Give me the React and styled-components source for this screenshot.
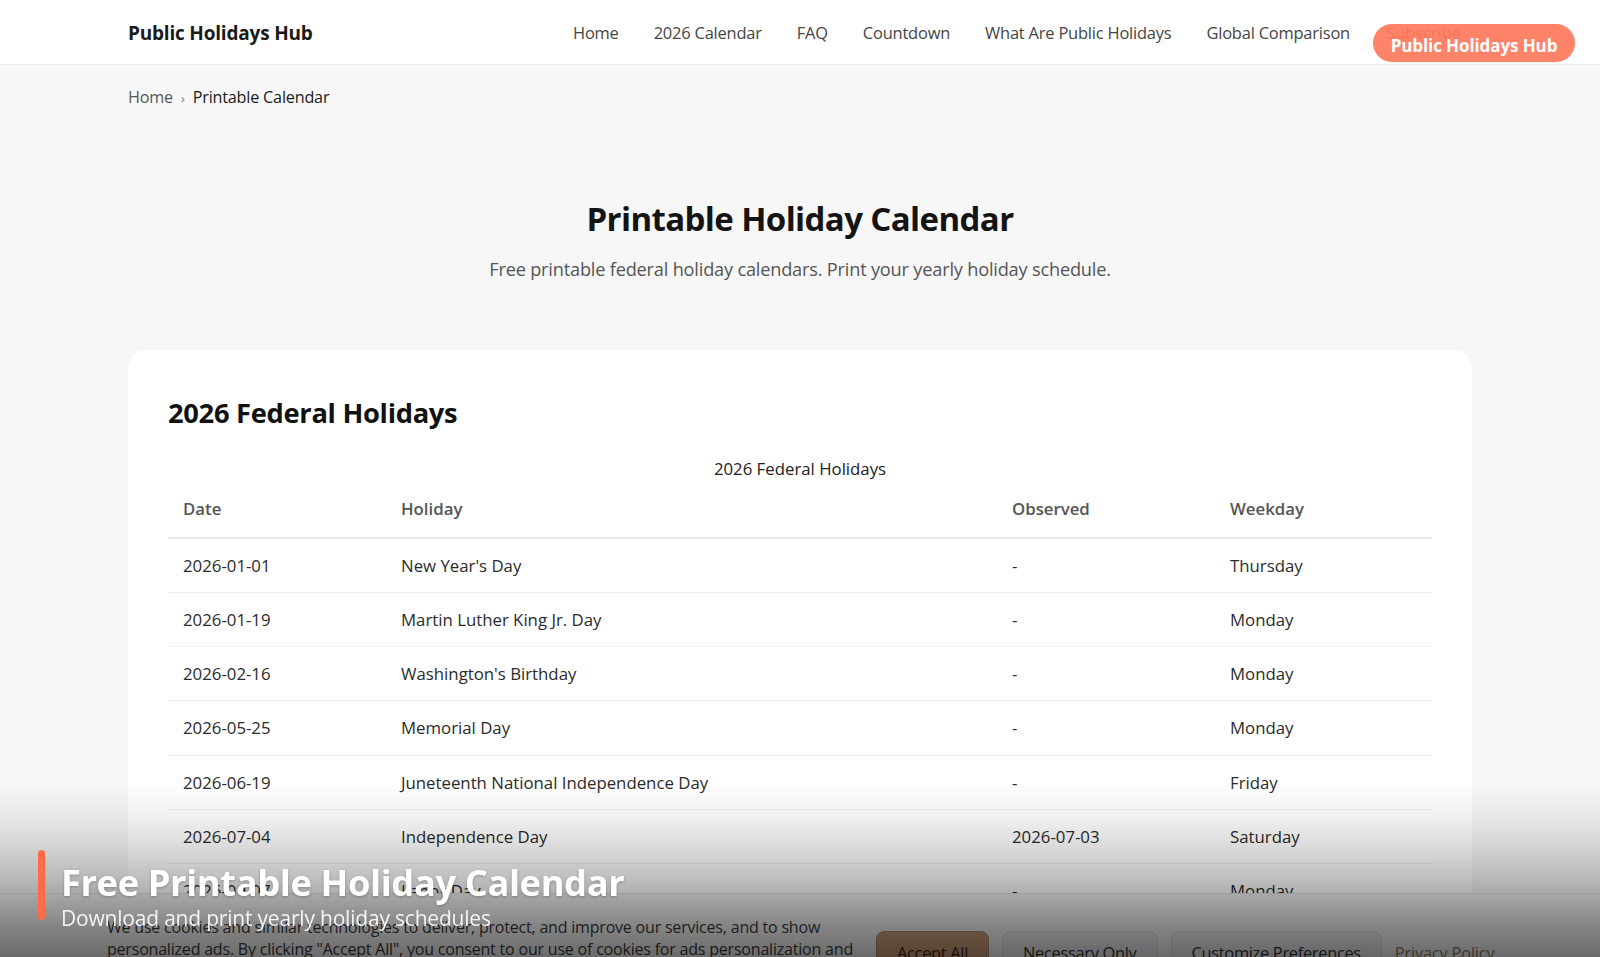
import React from "react";
import styled, { createGlobalStyle } from "styled-components";

const GlobalStyle = createGlobalStyle`
  html, body {
    margin: 0;
    padding: 0;
    overflow: hidden;
    height: 100%;
  }
  body {
    background: #f7f7f7;
    font-family: "Open Sans", "Noto Sans", "Liberation Sans", sans-serif;
    color: #222;
  }
  * { box-sizing: border-box; }
`;

const FONT = `"Open Sans", "Noto Sans", "Liberation Sans", sans-serif`;

const Page = styled.div`
  min-height: 100vh;
  background: #f7f7f7;
`;

const Header = styled.header`
  background: #ffffff;
  border-bottom: 1px solid #eeeeee;
  height: 65px;
`;

const HeaderInner = styled.div`
  max-width: 1344px;
  margin: 0 auto;
  height: 100%;
  display: flex;
  align-items: center;
  justify-content: space-between;
  padding-top: 1px;
`;

const Logo = styled.a`
  font-family: ${FONT};
  font-weight: 700;
  font-size: 19px;
  color: #1a1a1a;
  text-decoration: none;
  letter-spacing: -0.2px;
`;

const Nav = styled.nav`
  display: flex;
  align-items: center;
  gap: 35px;
`;

const NavLink = styled.a`
  font-family: ${FONT};
  font-size: 16.45px;
  color: #454545;
  text-decoration: none;
  letter-spacing: -0.2px;
`;

const SubscribeButton = styled.button`
  font-family: ${FONT};
  font-size: 16.45px;
  color: #555;
  background: transparent;
  border: none;
  padding: 8px 15px;
  margin-left: -14px;
  margin-right: -4px;
  cursor: pointer;
`;

const HubBadge = styled.div`
  position: absolute;
  top: 24px;
  left: 1373px;
  width: 202px;
  height: 38px;
  border-radius: 19px;
  background: rgba(255, 122, 92, 0.93);
  color: #fff;
  font-family: ${FONT};
  font-weight: 700;
  font-size: 17px;
  display: flex;
  align-items: center;
  justify-content: center;
  padding-top: 4px;
  letter-spacing: -0.1px;
`;

const Container = styled.main`
  max-width: 1344px;
  margin: 0 auto;
`;

const Breadcrumb = styled.nav`
  display: flex;
  align-items: center;
  gap: 8px;
  padding-top: 19px;
  font-family: ${FONT};
  font-size: 16.2px;
  line-height: 22px;
  letter-spacing: -0.2px;
`;

const Crumb = styled.a`
  color: ${(p) => (p.$current ? "#1a1a1a" : "#555")};
  font-weight: ${(p) => (p.$current ? 500 : 400)};
  text-decoration: none;
`;

const Sep = styled.span`
  color: #777;
  font-size: 13px;
  padding-top: 3px;
`;

const Hero = styled.section`
  text-align: center;
  padding-top: 89px;
`;

const Title = styled.h1`
  margin: 0;
  font-family: ${FONT};
  font-weight: 700;
  font-size: 33px;
  line-height: 41px;
  color: #141414;
  letter-spacing: -0.6px;
`;

const Subtitle = styled.p`
  margin: 17px 0 0;
  font-family: ${FONT};
  font-size: 18.2px;
  line-height: 27px;
  color: #555;
  letter-spacing: -0.2px;
`;

const Card = styled.section`
  margin-top: 67px;
  background: #fff;
  border-radius: 18px;
  padding: 43px 40px 40px;
  box-shadow: 0 1px 3px rgba(0, 0, 0, 0.03);
`;

const CardTitle = styled.h2`
  margin: 0;
  font-family: ${FONT};
  font-weight: 700;
  font-size: 27.3px;
  line-height: 40px;
  color: #111;
  letter-spacing: -0.3px;
`;

const Table = styled.table`
  margin-top: 25px;
  width: 100%;
  border-collapse: collapse;
  font-family: ${FONT};
  font-size: 16.8px;
`;

const Caption = styled.caption`
  caption-side: top;
  line-height: 22px;
  color: #222;
  padding-bottom: 2px;
`;

const Th = styled.th`
  text-align: left;
  font-weight: 600;
  color: #555;
  padding: 16px 15px 17px;
  line-height: 21.5px;
  border-bottom: 2px solid #e6e6e6;
  width: ${(p) => p.$w || "auto"};
`;

const Td = styled.td`
  padding: 16px 15px;
  line-height: 21.3px;
  color: #2b2b2b;
  border-bottom: 1px solid #f0f0f0;
`;

const Shade = styled.div`
  position: fixed;
  left: 0;
  right: 0;
  bottom: 0;
  height: 175px;
  pointer-events: none;
  background: linear-gradient(
    to bottom,
    rgba(0, 0, 0, 0) 0%,
    rgba(0, 0, 0, 0.06) 20%,
    rgba(0, 0, 0, 0.17) 42%,
    rgba(0, 0, 0, 0.3) 62%,
    rgba(0, 0, 0, 0.46) 82%,
    rgba(0, 0, 0, 0.57) 100%
  );
  z-index: 20;
`;

const OverlayCaption = styled.div`
  position: fixed;
  left: 38px;
  top: 850px;
  display: flex;
  gap: 16px;
  z-index: 30;
`;

const AccentBar = styled.div`
  width: 7px;
  height: 70px;
  border-radius: 4px;
  background: #ff6b47;
`;

const OverlayText = styled.div`
  display: flex;
  flex-direction: column;
  font-family: ${FONT};
  color: #fff;
`;

const OverlayTitle = styled.div`
  font-weight: 700;
  font-size: 36.3px;
  line-height: 44px;
  margin-top: 10px;
  letter-spacing: -0.4px;
  text-shadow: 0 1px 3px rgba(0, 0, 0, 0.25);
`;

const OverlaySub = styled.div`
  font-size: 21px;
  line-height: 28px;
  color: rgba(255, 255, 255, 0.9);
  margin-top: 0px;
  letter-spacing: -0.2px;
`;

const CookieBanner = styled.div`
  position: fixed;
  left: 0;
  right: 0;
  top: 893px;
  height: 140px;
  background: #f6f6f6;
  border-top: 1px solid #e4e4e4;
  z-index: 10;
  display: flex;
  align-items: flex-start;
  padding: 22px 0 0 107px;
  gap: 17px;
`;

const CookieText = styled.p`
  margin: 0;
  width: 752px;
  font-family: ${FONT};
  font-size: 16px;
  line-height: 22px;
  color: #3a3a3a;
  letter-spacing: -0.2px;
`;

const CookieActions = styled.div`
  display: flex;
  align-items: center;
  gap: 13px;
  padding-top: 15px;
`;

const CookieButton = styled.button`
  font-family: ${FONT};
  font-size: 16.4px;
  letter-spacing: -0.3px;
  height: 42px;
  padding: 0 20px;
  border-radius: 8px;
  border: 1px solid ${(p) => (p.$primary ? "#b58a66" : "#dcdcdc")};
  background: ${(p) => (p.$primary ? "#c99c77" : "#ececef")};
  color: ${(p) => (p.$primary ? "#3a2516" : "#333")};
`;

const PolicyLink = styled.a`
  font-family: ${FONT};
  font-size: 16.4px;
  color: #8a7a60;
  text-decoration: none;
  letter-spacing: -0.2px;
`;

const holidays = [
  ["2026-01-01", "New Year's Day", "-", "Thursday"],
  ["2026-01-19", "Martin Luther King Jr. Day", "-", "Monday"],
  ["2026-02-16", "Washington's Birthday", "-", "Monday"],
  ["2026-05-25", "Memorial Day", "-", "Monday"],
  ["2026-06-19", "Juneteenth National Independence Day", "-", "Friday"],
  ["2026-07-04", "Independence Day", "2026-07-03", "Saturday"],
  ["2026-09-07", "Labor Day", "-", "Monday"],
  ["2026-10-12", "Columbus Day", "-", "Monday"],
  ["2026-11-11", "Veterans Day", "-", "Wednesday"],
  ["2026-11-26", "Thanksgiving Day", "-", "Thursday"],
  ["2026-12-25", "Christmas Day", "-", "Friday"],
];

const navItems = [
  "Home",
  "2026 Calendar",
  "FAQ",
  "Countdown",
  "What Are Public Holidays",
  "Global Comparison",
];

export default function App() {
  return (
    <Page>
      <GlobalStyle />
      <Header>
        <HeaderInner>
          <Logo href="#">Public Holidays Hub</Logo>
          <Nav>
            {navItems.map((n) => (
              <NavLink key={n} href="#">
                {n}
              </NavLink>
            ))}
            <SubscribeButton>Subscribe</SubscribeButton>
          </Nav>
        </HeaderInner>
      </Header>
      <HubBadge>Public Holidays Hub</HubBadge>

      <Container>
        <Breadcrumb>
          <Crumb href="#">Home</Crumb>
          <Sep>›</Sep>
          <Crumb $current>Printable Calendar</Crumb>
        </Breadcrumb>

        <Hero>
          <Title>Printable Holiday Calendar</Title>
          <Subtitle>
            Free printable federal holiday calendars. Print your yearly holiday
            schedule.
          </Subtitle>
        </Hero>

        <Card>
          <CardTitle>2026 Federal Holidays</CardTitle>
          <Table>
            <Caption>2026 Federal Holidays</Caption>
            <thead>
              <tr>
                <Th $w="218px">Date</Th>
                <Th $w="611px">Holiday</Th>
                <Th $w="218px">Observed</Th>
                <Th>Weekday</Th>
              </tr>
            </thead>
            <tbody>
              {holidays.map((h) => (
                <tr key={h[0]}>
                  {h.map((c, i) => (
                    <Td key={i}>{c}</Td>
                  ))}
                </tr>
              ))}
            </tbody>
          </Table>
        </Card>
      </Container>

      <CookieBanner>
        <CookieText>
          We use cookies and similar technologies to deliver, protect, and
          improve our services, and to show personalized ads. By clicking
          "Accept All", you consent to our use of cookies for ads
          personalization and analytics.
        </CookieText>
        <CookieActions>
          <CookieButton $primary>Accept All</CookieButton>
          <CookieButton>Necessary Only</CookieButton>
          <CookieButton>Customize Preferences</CookieButton>
          <PolicyLink href="#">Privacy Policy</PolicyLink>
        </CookieActions>
      </CookieBanner>

      <Shade />
      <OverlayCaption>
        <AccentBar />
        <OverlayText>
          <OverlayTitle>Free Printable Holiday Calendar</OverlayTitle>
          <OverlaySub>Download and print yearly holiday schedules</OverlaySub>
        </OverlayText>
      </OverlayCaption>
    </Page>
  );
}
